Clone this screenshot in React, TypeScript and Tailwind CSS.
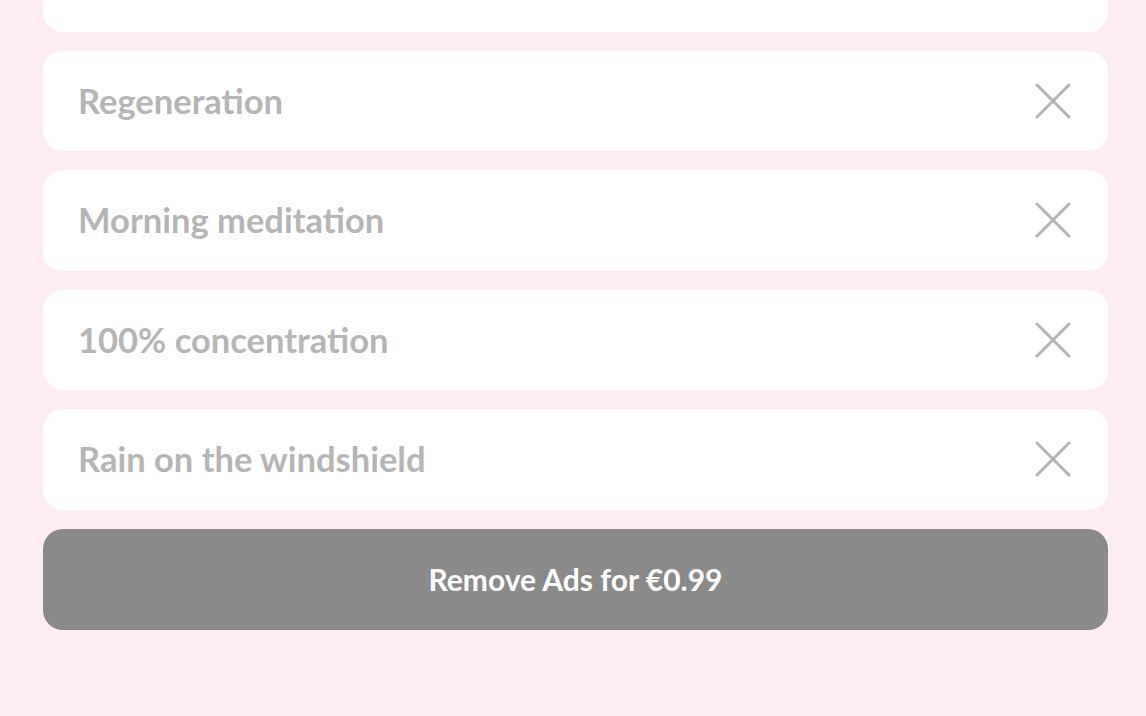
import React from "react";

const items = ["", "Regeneration", "Morning meditation", "100% concentration", "Rain on the windshield"];

function XIcon() {
  return (
    <svg width="36" height="36" viewBox="0 0 36 36" fill="none">
      <path d="M2 2L34 34M34 2L2 34" stroke="#b3b3b3" strokeWidth="3" strokeLinecap="round" />
    </svg>
  );
}

export default function App() {
  return (
    <div className="w-[1146px] h-[716px] overflow-hidden bg-[#fdedf0]" style={{ fontFamily: "Lato, 'Open Sans', sans-serif" }}>
      <div className="flex flex-col gap-[19px] pl-[43px] pr-[38px] mt-[-69px]">
        {items.map((t, i) => (
          <div key={i} className="h-[100.5px] bg-white rounded-[20px] flex items-center justify-between pl-[35px] pr-[37px]">
            <span className="text-[34.5px] font-bold text-[#b5b5b5]">{t}</span>
            {t && <XIcon />}
          </div>
        ))}
        <div className="h-[101px] bg-[#8a8a8a] rounded-[20px] flex items-center justify-center">
          <span className="text-[30px] font-bold text-white">Remove Ads for €0.99</span>
        </div>
      </div>
    </div>
  );
}
